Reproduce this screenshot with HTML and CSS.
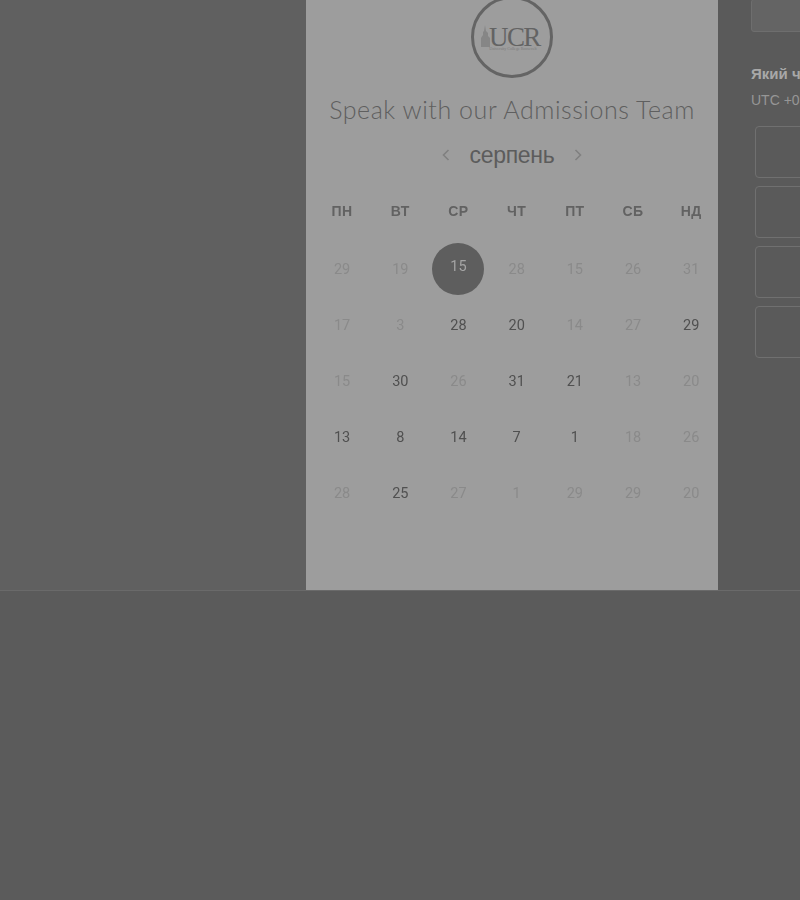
FILE: index.html
```html
<!DOCTYPE html>
<html lang="uk">
<head>
    <meta charset="UTF-8">
    <meta name="viewport" content="width=device-width, initial-scale=1.0">
    <title>Speak with our Admissions Team</title>
    <link rel="stylesheet" href="styles.css">
</head>
<body>
    <div class="booking">
        <div class="side-left"></div>
        <div class="card">
            <div class="logo">
                <svg class="logo-tower" width="9" height="22" viewBox="0 0 9 22">
                    <path d="M4 0 L5 6 L7 8 L7 11 L9 13 L9 22 L0 22 L0 13 L2 10 L2 7 L3 6 Z" fill="#868686"/>
                </svg>
                <span class="logo-name">UCR</span>
                <span class="logo-sub">University College Roosevelt</span>
            </div>
            <h1 class="title">Speak with our Admissions Team</h1>
            <div class="month">
                <svg class="arrow" width="8" height="12" viewBox="0 0 8 12"><path d="M6.5 1 L1.5 6 L6.5 11" fill="none" stroke="#808080" stroke-width="1.6"/></svg>
                <span class="month-name">серпень</span>
                <svg class="arrow" width="8" height="12" viewBox="0 0 8 12"><path d="M1.5 1 L6.5 6 L1.5 11" fill="none" stroke="#808080" stroke-width="1.6"/></svg>
            </div>
            <div class="weekdays">
                <div>ПН</div><div>ВТ</div><div>СР</div><div>ЧТ</div><div>ПТ</div><div>СБ</div><div>НД</div>
            </div>
            <div class="days">
                <div class="day off">29</div><div class="day off">19</div><div class="day selected"><span>15</span></div><div class="day off">28</div><div class="day off">15</div><div class="day off">26</div><div class="day off">31</div>
                <div class="day off">17</div><div class="day off">3</div><div class="day">28</div><div class="day">20</div><div class="day off">14</div><div class="day off">27</div><div class="day">29</div>
                <div class="day off">15</div><div class="day">30</div><div class="day off">26</div><div class="day">31</div><div class="day">21</div><div class="day off">13</div><div class="day off">20</div>
                <div class="day">13</div><div class="day">8</div><div class="day">14</div><div class="day">7</div><div class="day">1</div><div class="day off">18</div><div class="day off">26</div>
                <div class="day off">28</div><div class="day">25</div><div class="day off">27</div><div class="day off">1</div><div class="day off">29</div><div class="day off">29</div><div class="day off">20</div>
            </div>
        </div>
        <div class="side-right">
            <div class="top-btn"></div>
            <div class="time-title">Який час вам підходить?</div>
            <div class="time-zone">UTC +03:00</div>
            <div class="slots">
                <div class="slot"></div>
                <div class="slot"></div>
                <div class="slot"></div>
                <div class="slot"></div>
            </div>
        </div>
    </div>
    <div class="bottom"></div>
</body>
</html>
```

FILE: styles.css
```css
html, body {
    height: 100%;
}
body {
    margin: 0;
    background-color: #5b5b5b;
    font-family: "Liberation Sans", Arial, sans-serif;
    overflow: hidden;
}
.booking {
    display: flex;
    height: 590px;
    overflow: hidden;
}
.side-left {
    width: 306px;
    flex: none;
    background-color: #606060;
}
.card {
    width: 412px;
    flex: none;
    background-color: #9d9d9d;
    text-align: center;
    filter: blur(0.35px);
}
.logo {
    position: relative;
    box-sizing: border-box;
    width: 82px;
    height: 82px;
    margin: -4px auto 0;
    border: 3px solid #646464;
    border-radius: 50%;
}
.logo-tower {
    position: absolute;
    left: 7px;
    top: 26px;
}
.logo-name {
    position: absolute;
    left: 15px;
    top: 23px;
    font-family: "Liberation Serif", serif;
    font-size: 27px;
    line-height: 30px;
    letter-spacing: -1.6px;
    color: #636363;
}
.logo-sub {
    position: absolute;
    left: 9px;
    top: 47px;
    width: 60px;
    font-family: "Liberation Serif", serif;
    font-size: 4px;
    line-height: 5px;
    white-space: nowrap;
    color: #7b7b7b;
}
.title {
    margin: 15px 0 0;
    font-family: Lato, sans-serif;
    font-size: 25px;
    font-weight: 300;
    line-height: 32px;
    letter-spacing: 0.55px;
    color: #5f5f5f;
    white-space: nowrap;
}
.month {
    display: flex;
    justify-content: center;
    align-items: center;
    gap: 20px;
    margin-top: 15px;
    height: 30px;
}
.month-name {
    font-size: 23px;
    letter-spacing: -0.3px;
    color: #5c5c5c;
}
.weekdays, .days {
    display: grid;
    grid-template-columns: repeat(7, 58.2px);
    margin-left: 7px;
}
.weekdays {
    margin-top: 27px;
    height: 28px;
    line-height: 28px;
    font-size: 14px;
    font-weight: bold;
    letter-spacing: 0.4px;
    color: #626262;
}
.days {
    grid-auto-rows: 56px;
    margin-top: 16px;
}
.day {
    display: flex;
    align-items: center;
    justify-content: center;
    font-family: Roboto, sans-serif;
    font-size: 14.5px;
    color: #505050;
}
.day.off {
    color: #8a8a8a;
}
.day.selected span {
    width: 52px;
    height: 52px;
    border-radius: 50%;
    background-color: #5e5e5e;
    color: #a4a4a4;
    line-height: 48px;
}
.side-right {
    flex: 1;
    min-width: 0;
    background-color: #5a5a5a;
    padding-left: 33px;
    white-space: nowrap;
}
.top-btn {
    box-sizing: border-box;
    width: 120px;
    height: 33px;
    margin-top: -1px;
    background-color: #646464;
    border: 1px solid #6e6e6e;
    border-radius: 3px;
}
.time-title {
    margin-top: 33px;
    font-size: 15px;
    font-weight: bold;
    line-height: 18px;
    color: #a8a8a8;
}
.time-zone {
    margin-top: 9px;
    font-size: 14px;
    line-height: 16px;
    color: #969696;
}
.slots {
    display: flex;
    flex-direction: column;
    gap: 8px;
    margin: 18px 0 0 4px;
}
.slot {
    box-sizing: border-box;
    width: 120px;
    height: 52px;
    border: 1px solid #707070;
    border-radius: 4px;
}
.bottom {
    height: 310px;
    border-top: 1px solid #6a6a6a;
}
```
